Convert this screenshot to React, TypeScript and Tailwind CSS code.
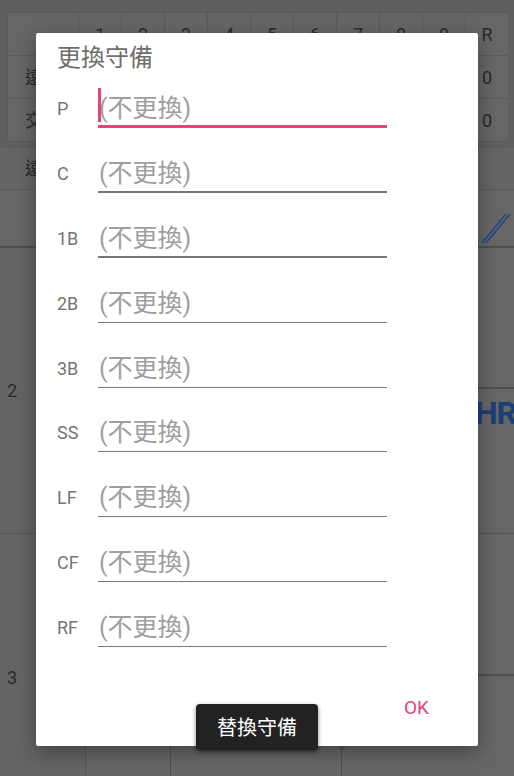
import React from "react";

const FONT = "font-['Roboto','Noto_Sans_CJK_TC',sans-serif]";

const positions = ["P", "C", "1B", "2B", "3B", "SS", "LF", "CF", "RF"];

function borderFor(i: number) {
  if (i === 0) return "border-b-[3px] border-[#e4457f]";
  if (i === 1 || i === 2) return "border-b-2 border-[#767676]";
  return "border-b border-[#7a7a7a]";
}

function FieldRow({ label, i }: { label: string; i: number }) {
  return (
    <div className="flex h-[46px]">
      <div className="w-[41px] pt-[12px] text-[18px] leading-[30px] text-[#757575]">{label}</div>
      <div
        className={`relative box-border w-[289px] h-[46px] pt-[12px] text-[25px] leading-[30px] text-[#9e9e9e] ${borderFor(i)}`}
      >
        {i === 0 && <span className="absolute left-0 top-[6px] w-[2.5px] h-[34px] bg-[#e4457f]" />}
        <span className="pl-[1px]">(不更換)</span>
      </div>
    </div>
  );
}

export default function App() {
  const header = ["", "1", "2", "3", "4", "5", "6", "7", "8", "9", "R"];
  const row2 = ["遠征", "", "", "", "", "", "", "", "", "", "0"];
  const row3 = ["交流", "", "", "", "", "", "", "", "", "", "0"];
  return (
    <div className={`relative w-[514px] h-[776px] overflow-hidden bg-[#5f5f5f] ${FONT}`}>
      {/* Background page (dimmed) */}
      <div className="pt-[12px] px-[7px]">
        <div className="grid grid-cols-[70px_repeat(10,42px)] gap-px bg-[#5a5a5a] border border-[#5a5a5a] w-[501px]">
          {[header, row2, row3].map((row, r) =>
            row.map((c, k) => (
              <div
                key={`${r}-${k}`}
                className="h-[42px] bg-[#666666] flex items-center justify-center text-[18px] text-[#2a2a2a]"
              >
                {c}
              </div>
            ))
          )}
        </div>
      </div>
      <div className="mt-[5px] h-[43px] bg-[#656565] border-y border-[#5a5a5a] flex items-center pl-[25px] text-[18px] text-[#2a2a2a]">
        遠攻
      </div>
      <div className="h-[58px] bg-[#666666] border-b-2 border-[#4e4e4e] flex justify-end items-end pb-[2px] pr-[3px]">
        <svg width="30" height="32" viewBox="0 0 30 32">
          <line x1="1" y1="31" x2="25" y2="2" stroke="#1f4a85" strokeWidth="1.6" />
          <line x1="5" y1="31" x2="29" y2="2" stroke="#1f4a85" strokeWidth="1.6" />
        </svg>
      </div>
      <div className="flex h-[286px] border-b border-[#545454]">
        <div className="w-[86px] flex items-center pl-[7px] border-r border-[#5a5a5a] text-[18px] text-[#2a2a2a] bg-[#646464]">
          2
        </div>
        <div className="flex-1 flex flex-col bg-[#666666]">
          <div className="h-[141px] border-b-2 border-[#4e4e4e]" />
          <div className="flex-1 flex justify-end pt-[8px] pr-0">
            <span className="text-[32px] font-bold leading-[32px] text-[#1c3f78] font-['Roboto',sans-serif] tracking-[-1px] mr-[-2px]">
              HR
            </span>
          </div>
        </div>
      </div>
      <div className="flex h-[286px]">
        <div className="w-[86px] flex items-center pl-[7px] border-r border-[#555555] text-[18px] text-[#2a2a2a] bg-[#646464]">
          3
        </div>
        <div className="flex-1 flex flex-col bg-[#666666]">
          <div className="h-[142px] border-b-2 border-[#4e4e4e]" />
          <div className="relative flex-1 flex">
            <div className="w-[85px] border-r border-[#505050]" />
            <div className="w-[171px] border-r border-[#505050]" />
            <div className="flex-1" />
            <svg className="absolute left-[244px] top-[60px]" width="24" height="20" viewBox="0 0 24 20">
              <line x1="1" y1="0" x2="12" y2="14" stroke="#505050" strokeWidth="1.2" />
              <line x1="23" y1="0" x2="12" y2="14" stroke="#505050" strokeWidth="1.2" />
            </svg>
          </div>
        </div>
      </div>

      {/* Dialog */}
      <div className="absolute left-[36px] top-[33px] w-[442px] h-[713px] bg-white rounded-[2px] shadow-[0_6px_20px_rgba(0,0,0,0.35)] flex flex-col pl-[21px]">
        <div className="pt-[11px] mb-[10px] text-[24px] leading-[28px] text-[#6e6e6e]">更換守備</div>
        <div className="flex flex-col gap-[18.875px]">
          {positions.map((p, i) => (
            <FieldRow key={p} label={p} i={i} />
          ))}
        </div>
        <div className="flex-1 flex justify-end items-end pb-[28px] pr-[49px]">
          <span className="text-[19px] leading-[20px] font-normal text-[#e2447e]">OK</span>
        </div>
      </div>

      {/* Toast */}
      <div className="absolute left-[196px] top-[704px] w-[122px] h-[46px] rounded-[4px] bg-[#222222] shadow-[0_2px_4px_rgba(0,0,0,0.5)] flex items-center justify-center">
        <span className="text-[20px] text-white font-['Noto_Sans_CJK_TC',sans-serif]">替換守備</span>
      </div>
    </div>
  );
}
